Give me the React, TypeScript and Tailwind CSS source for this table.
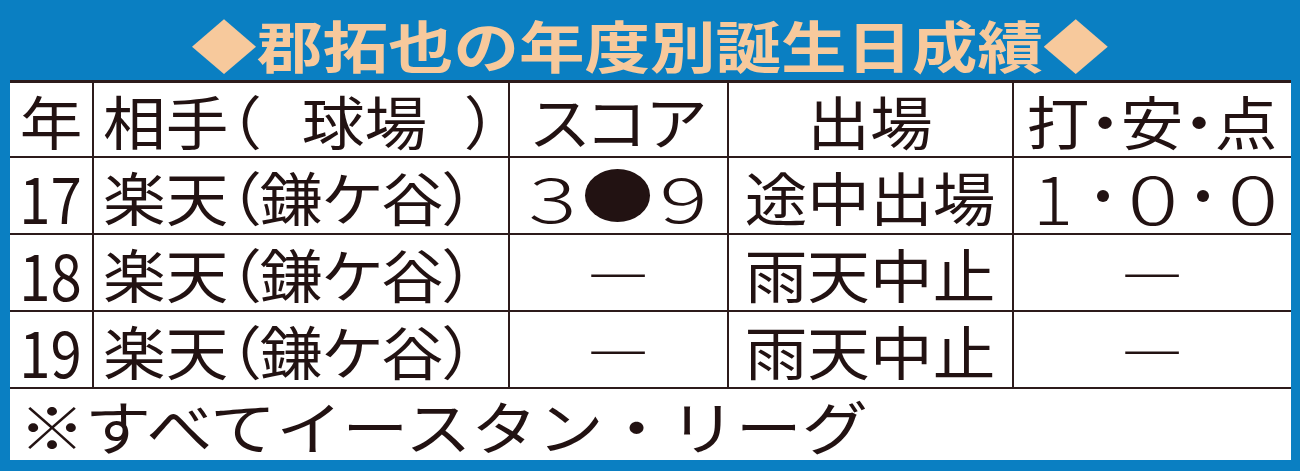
import type { ReactNode } from 'react'

const rows = [
  { year: '17', team: '楽天', park: '鎌ケ谷', game: '途中出場', played: true },
  { year: '18', team: '楽天', park: '鎌ケ谷', game: '雨天中止', played: false },
  { year: '19', team: '楽天', park: '鎌ケ谷', game: '雨天中止', played: false },
]

// wide type, like the paper's stretched gothic
function Wide({ children, left }: { children: ReactNode; left?: boolean }) {
  return (
    <span
      className={`inline-block whitespace-nowrap text-[58px] leading-none scale-x-[1.08] [font-feature-settings:'palt'] ${
        left ? 'origin-left' : 'origin-center'
      }`}
    >
      {children}
    </span>
  )
}

function Digit({ children, className = '' }: { children: ReactNode; className?: string }) {
  return (
    <span className={`inline-block text-center leading-none font-light ${className}`}>{children}</span>
  )
}

function Cell({
  children,
  first,
  center = true,
  className = '',
}: {
  children: ReactNode
  first?: boolean
  center?: boolean
  className?: string
}) {
  return (
    <div
      className={`flex items-center border-b-2 border-[#2d1b1b] ${first ? '' : 'border-l-2'} ${
        center ? 'justify-center' : 'justify-start pl-[9px]'
      } ${className}`}
    >
      {children}
    </div>
  )
}

export default function App() {
  return (
    <div className="w-[1300px] h-[471px] bg-[#0a7fc2] text-[#221212] font-['Noto_Sans_CJK_JP','Noto_Sans_CJK_SC',sans-serif]">
      {/* Title */}
      <div className="h-[80px] flex items-center justify-center pt-[8px]">
        <span className="inline-block whitespace-nowrap text-[56px] font-bold leading-none scale-x-[1.17] text-[#f7c99c]">
          ◆郡拓也の年度別誕生日成績◆
        </span>
      </div>

      {/* Table */}
      <div className="ml-[10px] w-[1281px] bg-white border-t-[3px] border-[#2d1b1b] grid grid-cols-[82px_416px_219px_285px_279px]">
        {/* Header */}
        <Cell first className="h-[75px]">
          <Wide>年</Wide>
        </Cell>
        <Cell center={false} className="h-[75px]">
          <Wide left>
            相手（<span className="ml-[39px]">球場</span>
            <span className="ml-[36px]">）</span>
          </Wide>
        </Cell>
        <Cell className="h-[75px]">
          <Wide>スコア</Wide>
        </Cell>
        <Cell className="h-[75px]">
          <Wide>出場</Wide>
        </Cell>
        <Cell className="h-[75px]">
          <Wide>打・安・点</Wide>
        </Cell>

        {rows.map((r) => (
          <div key={r.year} className="contents">
            <Cell first className="h-[77px]">
              <span className="inline-block leading-none text-[64px] scale-x-[0.88]">{r.year}</span>
            </Cell>
            <Cell center={false} className="h-[77px]">
              <Wide left>
                {r.team}（{r.park}）
              </Wide>
            </Cell>
            <Cell className="h-[77px]">
              {r.played ? (
                <div className="flex items-center gap-[10px]">
                  <Digit className="w-[45px] text-[62px] scale-x-[1.45]">3</Digit>
                  <span className="w-[65px] h-[53px] rounded-[50%] bg-[#221212]" />
                  <Digit className="w-[47px] text-[62px] scale-x-[1.45]">9</Digit>
                </div>
              ) : (
                <Wide>―</Wide>
              )}
            </Cell>
            <Cell className="h-[77px]">
              <Wide>{r.game}</Wide>
            </Cell>
            <Cell className="h-[77px]">
              {r.played ? (
                <div className="flex items-center">
                  <Digit className="w-[50px] text-[68px] scale-x-[1.1]">1</Digit>
                  <span className="w-[50px] flex justify-center">
                    <span className="w-[12px] h-[12px] rounded-full bg-[#221212]" />
                  </span>
                  <Digit className="w-[50px] text-[68px] scale-x-[1.4]">0</Digit>
                  <span className="w-[50px] flex justify-center">
                    <span className="w-[12px] h-[12px] rounded-full bg-[#221212]" />
                  </span>
                  <Digit className="w-[50px] text-[68px] scale-x-[1.4]">0</Digit>
                </div>
              ) : (
                <Wide>―</Wide>
              )}
            </Cell>
          </div>
        ))}

        {/* Note */}
        <div className="col-span-5 h-[71px] flex items-center pl-[9px]">
          <span className="inline-block whitespace-nowrap text-[58px] leading-none scale-x-[1.14] origin-left">
            ※すべてイースタン・リーグ
          </span>
        </div>
      </div>
    </div>
  )
}
